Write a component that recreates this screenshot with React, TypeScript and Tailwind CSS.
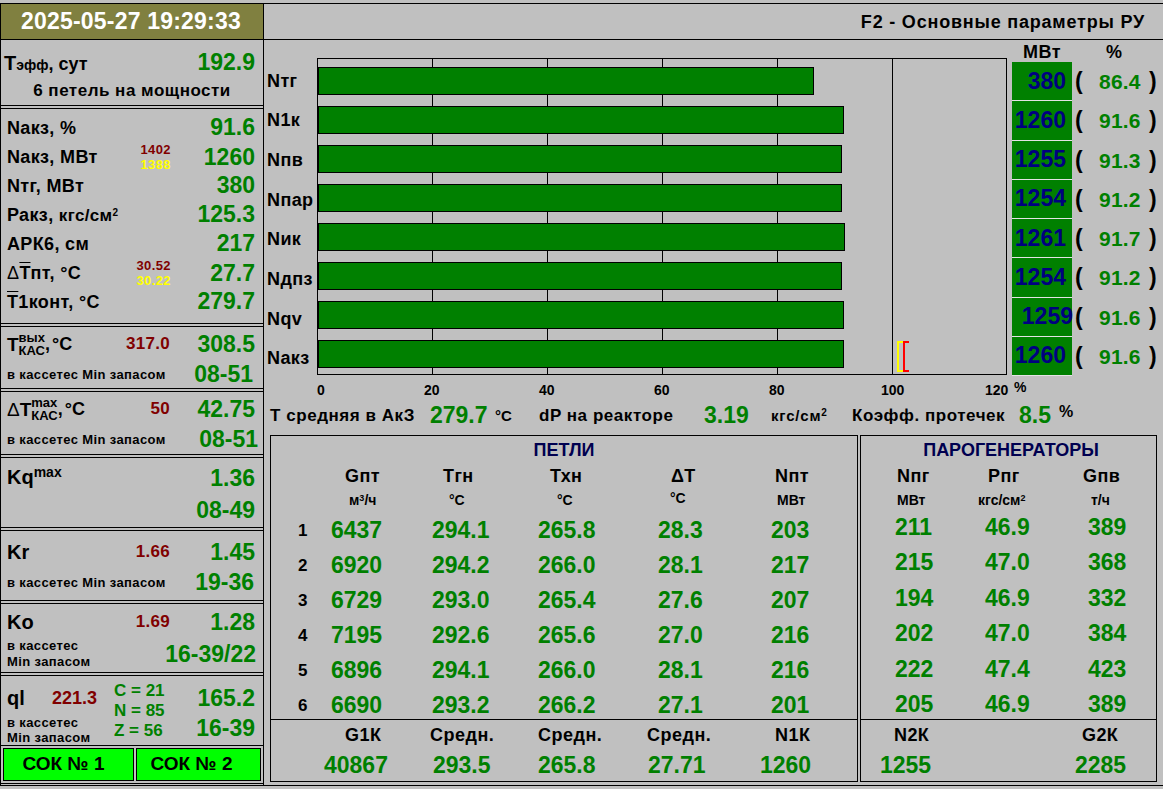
import { ReactNode } from 'react';

const bars = [
  { name: 'Nтг', pct: 86.4, mw: '380' },
  { name: 'N1к', pct: 91.6, mw: '1260' },
  { name: 'Nпв', pct: 91.3, mw: '1255' },
  { name: 'Nпар', pct: 91.2, mw: '1254' },
  { name: 'Nик', pct: 91.7, mw: '1261' },
  { name: 'Nдпз', pct: 91.2, mw: '1254' },
  { name: 'Nqv', pct: 91.6, mw: '1259' },
  { name: 'Nакз', pct: 91.6, mw: '1260' },
];

const loops = [
  ['1', '6437', '294.1', '265.8', '28.3', '203'],
  ['2', '6920', '294.2', '266.0', '28.1', '217'],
  ['3', '6729', '293.0', '265.4', '27.6', '207'],
  ['4', '7195', '292.6', '265.6', '27.0', '216'],
  ['5', '6896', '294.1', '266.0', '28.1', '216'],
  ['6', '6690', '293.2', '266.2', '27.1', '201'],
];

const generators = [
  ['211', '46.9', '389'],
  ['215', '47.0', '368'],
  ['194', '46.9', '332'],
  ['202', '47.0', '384'],
  ['222', '47.4', '423'],
  ['205', '46.9', '389'],
];

const PX_PER_PCT = 5.75;

function Sep() {
  return <div className="h-[4px] shrink-0 border-y border-black" />;
}

function Val({ children }: { children: ReactNode }) {
  return <span className="justify-self-end text-[23px] font-bold leading-none text-[#008000]">{children}</span>;
}

function Label({ children }: { children: ReactNode }) {
  return <span className="text-[18px] font-bold leading-none tracking-[0.35px] text-black">{children}</span>;
}

function Limit({ children }: { children: ReactNode }) {
  return <span className="mr-[1px] text-[17px] font-bold leading-none tracking-[0.3px] text-[#800000]">{children}</span>;
}

function Limits({ hi, lo }: { hi: string; lo: string }) {
  return (
    <div className="flex flex-col items-end text-[13px] font-bold leading-[15px] tracking-[0.4px]">
      <span className="text-[#800000]">{hi}</span>
      <span className="text-[#ffff00]">{lo}</span>
    </div>
  );
}

// label, optional red limit, value pinned to the right edge
function Row({ label, mid, value, h = 'h-[32px]' }: { label: ReactNode; mid?: ReactNode; value: string; h?: string }) {
  return (
    <div className={`grid ${h} grid-cols-[1fr_auto_84px] items-center pl-[6px] pr-[8px]`}>
      {label}
      <span>{mid}</span>
      <Val>{value}</Val>
    </div>
  );
}

function MinRow({ value, pr = 'pr-[9px]' }: { value: string; pr?: string }) {
  return (
    <div className={`flex h-[29px] items-center justify-between pl-[6px] ${pr}`}>
      <span className="text-[13px] font-bold leading-none tracking-[0.38px]">в кассетес Min запасом</span>
      <Val>{value}</Val>
    </div>
  );
}

function LeftPanel() {
  return (
    <div className="flex w-[264px] shrink-0 flex-col border-x border-black">
      <div className="flex h-[36px] shrink-0 items-center justify-center border-b border-black bg-[#808040] pr-[2px] text-[23px] font-bold tracking-[0.2px] text-white">
        2025-05-27 19:29:33
      </div>
      <div className="h-[65px] shrink-0 pt-[8px]">
        <div className="flex h-[29px] items-center justify-between pl-[3px] pr-[8px]">
          <span className="text-[18px] font-bold leading-none">
            <span className="text-[20px]">Т</span>
            <span className="text-[14px]">эфф</span>, сут
          </span>
          <Val>192.9</Val>
        </div>
        <div className="flex h-[27px] items-center justify-center text-[17px] font-bold tracking-[0.5px]">6 петель на мощности</div>
      </div>
      <Sep />
      <div className="h-[214px] shrink-0 pt-[4px]">
        <Row h="h-[29px]" label={<Label>Nакз, %</Label>} value="91.6" />
        <Row h="h-[29px]" label={<Label>Nакз, МВт</Label>} mid={<Limits hi="1402" lo="1388" />} value="1260" />
        <Row h="h-[29px]" label={<Label>Nтг, МВт</Label>} value="380" />
        <Row
          h="h-[29px]"
          label={
            <Label>
              Ракз, <span className="text-[17px]">кгс/см<sup className="text-[10px]">2</sup></span>
            </Label>
          }
          value="125.3"
        />
        <Row h="h-[29px]" label={<Label>АРК6, см</Label>} value="217" />
        <Row
          h="h-[29px]"
          label={
            <Label>
              <span className="font-normal">Δ</span>
              <span className="overline">Т</span>пт, °С
            </Label>
          }
          mid={<Limits hi="30.52" lo="30.22" />}
          value="27.7"
        />
        <Row
          h="h-[29px]"
          label={
            <Label>
              <span className="overline">Т</span>1конт, °С
            </Label>
          }
          value="279.7"
        />
      </div>
      <Sep />
      <div className="h-[61px] shrink-0 pt-[1px]">
        <Row
          label={
            <span className="flex items-center text-[19px] font-bold leading-none">
              Т
              <span className="flex flex-col text-[13px] leading-[13px]">
                <span>вых</span>
                <span>КАС</span>
              </span>
              <span className="text-[18px]">
                ,<span className="ml-[2px]">°С</span>
              </span>
            </span>
          }
          mid={<Limit>317.0</Limit>}
          value="308.5"
        />
        <MinRow value="08-51" pr="pr-[10px]" />
      </div>
      <Sep />
      <div className="h-[62px] shrink-0 pt-[1px]">
        <Row
          label={
            <span className="flex items-center text-[19px] font-bold leading-none">
              <span className="font-normal">Δ</span>Т
              <span className="flex flex-col text-[13px] leading-[13px]">
                <span>max</span>
                <span>КАС</span>
              </span>
              <span className="text-[18px]">
                ,<span className="ml-[2px]">°С</span>
              </span>
            </span>
          }
          mid={<Limit>50</Limit>}
          value="42.75"
        />
        <MinRow value="08-51" pr="pr-[5px]" />
      </div>
      <Sep />
      <div className="h-[69px] shrink-0 pt-[4px]">
        <Row
          label={
            <span className="-mt-[3px] text-[20px] font-bold leading-none">
              Kq<sup className="text-[14px]">max</sup>
            </span>
          }
          value="1.36"
        />
        <Row label={<span />} value="08-49" />
      </div>
      <Sep />
      <div className="h-[69px] shrink-0 pt-[5px]">
        <Row label={<span className="text-[20px] font-bold leading-none">Kr</span>} mid={<Limit>1.66</Limit>} value="1.45" />
        <MinRow value="19-36" />
      </div>
      <Sep />
      <div className="h-[68px] shrink-0 pt-[2px]">
        <Row label={<span className="text-[20px] font-bold leading-none">Ko</span>} mid={<Limit>1.69</Limit>} value="1.28" />
        <div className="flex h-[32px] items-center justify-between pl-[6px] pr-[7px]">
          <span className="text-[13px] font-bold leading-[16px] tracking-[0.38px]">
            в кассетес
            <br />
            Min запасом
          </span>
          <Val>16-39/22</Val>
        </div>
      </div>
      <Sep />
      <div className="flex h-[69px] shrink-0 pl-[6px] pr-[8px] pt-[4px]">
        <div className="w-[90px]">
          <div className="flex h-[35px] items-center justify-between">
            <span className="text-[20px] font-bold leading-none">ql</span>
            <span className="text-[18px] font-bold leading-none text-[#800000]">221.3</span>
          </div>
          <div className="text-[13px] font-bold leading-[15px] tracking-[0.38px]">
            в кассетес
            <br />
            Min запасом
          </div>
        </div>
        <div className="ml-[17px] flex flex-col pt-[1px] text-[17px] font-bold leading-[20px] text-[#008000]">
          <span>C = 21</span>
          <span>N = 85</span>
          <span>Z = 56</span>
        </div>
        <div className="ml-auto flex flex-col items-end gap-[7px] pt-[7px]">
          <Val>165.2</Val>
          <Val>16-39</Val>
        </div>
      </div>
      <div className="flex h-[39px] shrink-0 gap-[2px] border-y border-black px-[2px] py-[2px]">
        <button className="w-[131px] border border-black bg-[#00ff00] pr-[10px] text-[19px] font-bold">СОК № 1</button>
        <button className="flex-1 border border-black bg-[#00ff00] pr-[14px] text-[19px] font-bold">СОК № 2</button>
      </div>
    </div>
  );
}

function Chart() {
  return (
    <div className="flex h-[340px] shrink-0">
      <div className="flex w-[53px] shrink-0 flex-col pl-[3px] pt-[21px]">
        <div className="flex h-[317px] flex-col">
          {bars.map((b) => (
            <div key={b.name} className="flex flex-1 items-center text-[18px] font-bold leading-none tracking-[0.4px]">
              {b.name}
            </div>
          ))}
        </div>
      </div>
      <div className="pt-[18px]">
        <div className="relative flex h-[317px] w-[690px] flex-col border border-black pt-[2px]">
          {[20, 40, 60, 80, 100].map((t) => (
            <div key={t} className="absolute inset-y-0 w-px bg-black" style={{ left: t * PX_PER_PCT - 1 }} />
          ))}
          {bars.map((b) => (
            <div key={b.name} className="relative flex flex-1 items-center">
              <div className="h-[28px] border border-black bg-[#008000]" style={{ width: b.pct * PX_PER_PCT - 0.5 }} />
            </div>
          ))}
          <div className="absolute left-[579px] top-[282px] h-[31px] w-[7px] border-y-2 border-l-2 border-[#ffff00]" />
          <div className="absolute left-[585px] top-[282px] h-[31px] w-[6px] border-y-2 border-l-2 border-[#ff0000]" />
        </div>
      </div>
      <div className="ml-[5px] flex flex-col">
        <div className="flex h-[22px] items-start pt-[3px] text-[18px] font-bold leading-none">
          <span className="w-[60px] text-center tracking-[0.5px]">МВт</span>
          <span className="ml-[22px] w-[40px] text-center">%</span>
        </div>
        <div className="flex h-[314px] flex-col">
          {bars.map((b) => (
            <div key={b.name} className="flex flex-1 items-center">
              <div className="relative flex h-full w-[60px] items-center justify-end border-b border-[#e4e4e4] bg-[#008000] pr-[6px] text-[23px] font-bold leading-none text-[#000080]">
                <span className={b.name === 'Nqv' ? 'relative left-[7px]' : ''}>{b.mw}</span>
              </div>
              <span className="ml-[3px] w-[13px] text-[23px] font-bold leading-none">(</span>
              <span className="ml-[11px] w-[50px] text-[21px] font-bold leading-none tracking-[0.2px] text-[#008000]">{b.pct.toFixed(1)}</span>
              <span className="text-[23px] font-bold leading-none">)</span>
            </div>
          ))}
        </div>
      </div>
    </div>
  );
}

function AxisRow() {
  return (
    <div className="flex h-[20px] shrink-0 items-center pl-[53px] text-[14px] font-bold leading-none">
      <span className="w-[107px]">0</span>
      <span className="w-[115px]">20</span>
      <span className="w-[115px]">40</span>
      <span className="w-[115px]">60</span>
      <span className="w-[112px]">80</span>
      <span className="w-[104px]">100</span>
      <span className="w-[29px]">120</span>
      <span className="-mt-[6px]">%</span>
    </div>
  );
}

function StatsRow() {
  return (
    <div className="flex h-[35px] shrink-0 items-center pb-[5px] pl-[6px] font-bold leading-none">
      <span className="w-[160px] text-[17px] tracking-[0.55px]">Т средняя в АкЗ</span>
      <span className="w-[65px] text-[23px] text-[#008000]">279.7</span>
      <span className="w-[44px] text-[15px]">°С</span>
      <span className="w-[165px] text-[17px] tracking-[0.55px]">dP на реакторе</span>
      <span className="w-[67px] text-[23px] text-[#008000]">3.19</span>
      <span className="w-[81px] text-[15px] tracking-[0.8px]">
        кгс/см<sup className="text-[10px]">2</sup>
      </span>
      <span className="w-[167px] text-[17px] tracking-[0.55px]">Коэфф. протечек</span>
      <span className="w-[40px] text-[23px] text-[#008000]">8.5</span>
      <span className="-mt-[6px] text-[16px]">%</span>
    </div>
  );
}

function LoopsPanel() {
  return (
    <div className="flex h-[347px] w-[588px] shrink-0 flex-col border border-black">
      <div className="flex h-[28px] items-center justify-center text-[18px] font-bold leading-none text-[#000050]">ПЕТЛИ</div>
      <div className="grid h-[24px] grid-cols-[74px_98px_107px_121px_104px_1fr] items-center text-[18px] font-bold leading-none tracking-[0.4px]">
        <span />
        <span>Gпт</span>
        <span>Тгн</span>
        <span>Тхн</span>
        <span>ΔТ</span>
        <span>Nпт</span>
      </div>
      <div className="grid h-[24px] grid-cols-[78px_100px_108px_113px_107px_1fr] items-center text-[14px] font-bold leading-none">
        <span />
        <span>
          м<sup className="text-[9px]">3</sup>/ч
        </span>
        <span>°С</span>
        <span>°С</span>
        <span className="-mt-[4px]">°С</span>
        <span>МВт</span>
      </div>
      <div className="flex h-[207px] flex-col gap-[7px] pt-[4px]">
        {loops.map((r) => (
          <div key={r[0]} className="grid h-[28px] shrink-0 grid-cols-[60px_101px_106px_120px_113px_1fr] items-center text-[23px] font-bold leading-none text-[#008000]">
            <span className="pl-[27px] text-[17px] text-black">{r[0]}</span>
            <span>{r[1]}</span>
            <span>{r[2]}</span>
            <span>{r[3]}</span>
            <span>{r[4]}</span>
            <span>{r[5]}</span>
          </div>
        ))}
      </div>
      <div className="border-t border-black">
        <div className="grid h-[30px] grid-cols-[74px_85px_108px_109px_128px_1fr] items-center text-[18px] font-bold leading-none tracking-[0.5px]">
          <span />
          <span>G1К</span>
          <span>Средн.</span>
          <span>Средн.</span>
          <span>Средн.</span>
          <span>N1К</span>
        </div>
        <div className="grid h-[30px] grid-cols-[53px_109px_105px_110px_112px_1fr] items-center text-[23px] font-bold leading-none text-[#008000]">
          <span />
          <span>40867</span>
          <span>293.5</span>
          <span>265.8</span>
          <span>27.71</span>
          <span>1260</span>
        </div>
      </div>
    </div>
  );
}

function GeneratorsPanel() {
  return (
    <div className="ml-[2px] flex h-[347px] w-[297px] shrink-0 flex-col border border-black">
      <div className="flex h-[28px] items-center justify-center pl-[5px] text-[18px] font-bold leading-none text-[#000050]">ПАРОГЕНЕРАТОРЫ</div>
      <div className="grid h-[24px] grid-cols-[36px_91px_95px_1fr] items-center text-[18px] font-bold leading-none tracking-[0.4px]">
        <span />
        <span>Nпг</span>
        <span>Рпг</span>
        <span>Gпв</span>
      </div>
      <div className="grid h-[24px] grid-cols-[36px_81px_113px_1fr] items-center text-[14px] font-bold leading-none">
        <span />
        <span>МВт</span>
        <span>
          кгс/см<sup className="text-[9px]">2</sup>
        </span>
        <span>т/ч</span>
      </div>
      <div className="flex h-[207px] flex-col gap-[7.5px] pt-[1px]">
        {generators.map((r, i) => (
          <div key={i} className="grid h-[28px] shrink-0 grid-cols-[34px_90px_103px_1fr] items-center text-[23px] font-bold leading-none text-[#008000]">
            <span />
            <span>{r[0]}</span>
            <span>{r[1]}</span>
            <span>{r[2]}</span>
          </div>
        ))}
      </div>
      <div className="border-t border-black">
        <div className="grid h-[30px] grid-cols-[33px_188px_1fr] items-center text-[18px] font-bold leading-none tracking-[0.4px]">
          <span />
          <span>N2К</span>
          <span>G2К</span>
        </div>
        <div className="grid h-[30px] grid-cols-[19px_195px_1fr] items-center text-[23px] font-bold leading-none text-[#008000]">
          <span />
          <span>1255</span>
          <span>2285</span>
        </div>
      </div>
    </div>
  );
}

export default function App() {
  return (
    <div className="flex h-[789px] w-[1163px] flex-col overflow-hidden bg-[#c0c0c0] font-['Liberation_Sans',sans-serif] text-black">
      <div className="h-[3px] shrink-0" />
      <div className="flex h-[782px] shrink-0 border-t border-black">
        <LeftPanel />
        <div className="flex min-w-0 flex-1 flex-col">
          <div className="flex h-[36px] shrink-0 items-center justify-end border-b border-black pr-[18px] text-[18px] font-bold leading-none tracking-[0.8px]">
            F2 - Основные параметры РУ
          </div>
          <Chart />
          <AxisRow />
          <StatsRow />
          <div className="flex pl-[6px]">
            <LoopsPanel />
            <GeneratorsPanel />
          </div>
        </div>
      </div>
      <div className="border-t border-black" />
    </div>
  );
}
